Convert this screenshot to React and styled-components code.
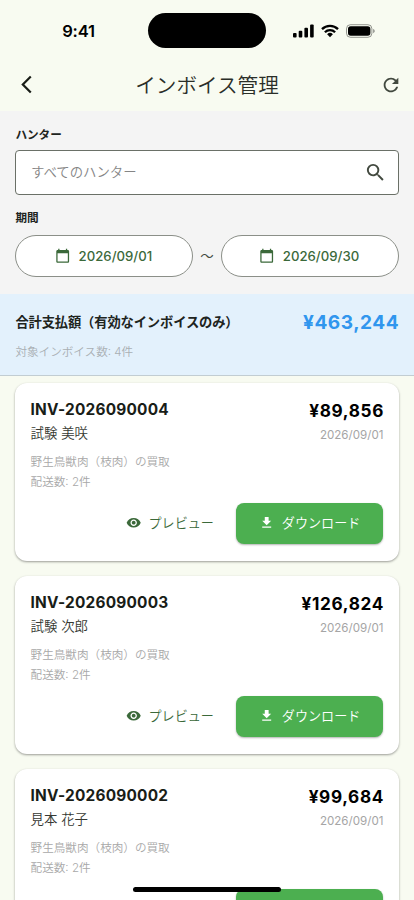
import React from "react";
import styled, { createGlobalStyle } from "styled-components";
import {
  MdArrowBackIosNew,
  MdCalendarToday,
  MdFileDownload,
  MdRefresh,
  MdSearch,
  MdVisibility,
} from "react-icons/md";

const invoices = [
  { id: "INV-2026090004", name: "試験 美咲", amount: "¥89,856" },
  { id: "INV-2026090003", name: "試験 次郎", amount: "¥126,824" },
  { id: "INV-2026090002", name: "見本 花子", amount: "¥99,684" },
];

const StatusBar = () => (
  <Status>
    <Clock>9:41</Clock>
    <Island />
    <Indicators>
      <svg width="21" height="14" viewBox="0 0 21 14">
        <rect x="0" y="9" width="3.6" height="4.6" rx="1" />
        <rect x="5.7" y="6.7" width="3.6" height="6.9" rx="1" />
        <rect x="11.4" y="3.8" width="3.6" height="9.8" rx="1" />
        <rect x="17.1" y="0.6" width="3.6" height="13" rx="1" />
      </svg>
      <svg width="18" height="14" viewBox="0 0 18 14">
        <g fill="none" stroke="#000" strokeWidth="2.3">
          <path d="M1 5.1a11.3 11.3 0 0 1 16 0" />
          <path d="M3.9 8.2a7.2 7.2 0 0 1 10.2 0" />
        </g>
        <path d="M9 13.2 6.1 10.3a4.1 4.1 0 0 1 5.8 0z" />
      </svg>
      <svg width="29" height="14" viewBox="0 0 29 14">
        <rect x="0.5" y="0.7" width="25.4" height="12.6" rx="4" fill="none" stroke="#000" strokeOpacity="0.4" />
        <rect x="2" y="2.2" width="22.4" height="9.6" rx="2.7" />
        <path d="M27.2 4.9v4.4c.9-.4 1.5-1.2 1.5-2.2s-.6-1.8-1.5-2.2z" opacity="0.45" />
      </svg>
    </Indicators>
  </Status>
);

const InvoiceCard = ({ id, name, amount }) => (
  <Card>
    <CardHead>
      <div>
        <InvoiceId>{id}</InvoiceId>
        <Hunter>{name}</Hunter>
      </div>
      <CardRight>
        <Amount>{amount}</Amount>
        <IssueDate>2026/09/01</IssueDate>
      </CardRight>
    </CardHead>
    <Detail>野生鳥獣肉（枝肉）の買取</Detail>
    <Detail>配送数: 2件</Detail>
    <Actions>
      <PreviewButton>
        <MdVisibility size={15.4} />
        プレビュー
      </PreviewButton>
      <DownloadButton>
        <MdFileDownload size={15.4} />
        ダウンロード
      </DownloadButton>
    </Actions>
  </Card>
);

const App = () => {
  return (
    <Screen>
      <GlobalStyle />
      <StatusBar />
      <AppBar>
        <MdArrowBackIosNew size={21} color="#191d17" />
        <Title>インボイス管理</Title>
        <MdRefresh size={22} color="#42493f" />
      </AppBar>
      <Filters>
        <Label>ハンター</Label>
        <SearchField>
          <span>すべてのハンター</span>
          <MdSearch size={23} />
        </SearchField>
        <Label>期間</Label>
        <Period>
          <DateButton>
            <MdCalendarToday size={15.4} />
            2026/09/01
          </DateButton>
          <Tilde>〜</Tilde>
          <DateButton>
            <MdCalendarToday size={15.4} />
            2026/09/30
          </DateButton>
        </Period>
      </Filters>
      <Summary>
        <SummaryRow>
          <SummaryLabel>合計支払額（有効なインボイスのみ）</SummaryLabel>
          <Total>¥463,244</Total>
        </SummaryRow>
        <Count>対象インボイス数: 4件</Count>
      </Summary>
      <List>
        {invoices.map((invoice) => (
          <InvoiceCard key={invoice.id} {...invoice} />
        ))}
      </List>
      <HomeIndicator />
    </Screen>
  );
};

const GlobalStyle = createGlobalStyle`
  * {
    box-sizing: border-box;
  }
  body {
    margin: 0;
    font-family: Inter, "Noto Sans CJK JP", sans-serif;
  }
  svg {
    display: block;
    flex-shrink: 0;
  }
  button {
    font-family: inherit;
    cursor: pointer;
  }
`;

const Screen = styled.div`
  position: relative;
  display: flex;
  flex-direction: column;
  width: 414px;
  height: 900px;
  overflow: hidden;
  background: #f8fbf1;
`;

const Status = styled.div`
  display: grid;
  grid-template-columns: 148px 118px 148px;
  align-items: center;
  height: 58px;
  padding-top: 3px;
  flex-shrink: 0;
`;

const Clock = styled.div`
  padding-left: 9px;
  text-align: center;
  font-size: 16.6px;
  font-weight: 600;
  letter-spacing: -0.2px;
`;

const Island = styled.div`
  height: 35px;
  border-radius: 18px;
  background: #000;
`;

const Indicators = styled.div`
  display: flex;
  align-items: center;
  gap: 7px;
  padding-left: 27px;
`;

const AppBar = styled.header`
  display: flex;
  align-items: center;
  justify-content: space-between;
  height: 53px;
  padding: 0 12px 0 16px;
  flex-shrink: 0;
`;

const Title = styled.h1`
  margin: 0;
  padding: 2px 3px 0 0;
  font-size: 20.6px;
  font-weight: 350;
  line-height: 28px;
  color: #2a2e28;
`;

const Filters = styled.section`
  height: 183px;
  padding: 16px 15.4px 0;
  background: #f4f4f4;
  flex-shrink: 0;
`;

const Label = styled.div`
  height: 17px;
  font-size: 11.6px;
  font-weight: 700;
  line-height: 17px;
  color: #20241e;
`;

const SearchField = styled.div`
  display: flex;
  align-items: center;
  justify-content: space-between;
  height: 45px;
  margin: 6px 0 15.4px;
  padding: 0 10.5px 1px 14.6px;
  border: 1px solid #6a7067;
  border-radius: 4px;
  background: #fff;
  color: #42493f;

  span {
    font-size: 13.4px;
    font-weight: 350;
    line-height: 20px;
    color: #858585;
  }
`;

const Period = styled.div`
  display: flex;
  align-items: center;
  margin-top: 8px;
`;

const DateButton = styled.button`
  display: flex;
  flex: 1;
  align-items: center;
  justify-content: center;
  gap: 8px;
  height: 41.5px;
  padding: 0 1px 0 0;
  border: 1px solid #8b8f88;
  border-radius: 21px;
  background: #fff;
  color: #3b693a;
  font-size: 13.2px;
  font-weight: 500;
`;

const Tilde = styled.span`
  width: 28px;
  text-align: center;
  font-size: 13.5px;
  line-height: 20px;
  padding-bottom: 1px;
  color: #42493f;
`;

const Summary = styled.section`
  height: 82px;
  padding: 14px 15.4px 0;
  border-bottom: 1px solid #c2cdd2;
  background: #e3f1fc;
  flex-shrink: 0;
`;

const SummaryRow = styled.div`
  display: flex;
  align-items: center;
  justify-content: space-between;
  height: 27px;
`;

const SummaryLabel = styled.div`
  font-size: 13.3px;
  font-weight: 700;
  letter-spacing: -0.15px;
  color: #20241e;
`;

const Total = styled.div`
  font-size: 19.1px;
  font-weight: 700;
  letter-spacing: 0.5px;
  margin-right: -0.5px;
  color: #3096ee;
`;

const Count = styled.div`
  margin-top: 9px;
  font-size: 11.6px;
  font-weight: 350;
  line-height: 17px;
  color: #a9afb3;
`;

const List = styled.main`
  display: flex;
  flex-direction: column;
  gap: 15px;
  padding: 7px 15.4px 0;
`;

const Card = styled.article`
  height: 178px;
  padding: 15px 15.2px;
  border-radius: 12px;
  background: #fff;
  box-shadow: 0 1px 3px rgba(0, 0, 0, 0.15), 0 1px 2px rgba(0, 0, 0, 0.25);
  flex-shrink: 0;
`;

const CardHead = styled.div`
  display: flex;
  justify-content: space-between;
  height: 55px;
`;

const CardRight = styled.div`
  text-align: right;
`;

const InvoiceId = styled.div`
  font-size: 15.4px;
  font-weight: 700;
  line-height: 23px;
  letter-spacing: 0.22px;
  color: #191d17;
`;

const Hunter = styled.div`
  font-size: 13.4px;
  font-weight: 350;
  line-height: 24px;
  color: #363933;
`;

const Amount = styled.div`
  font-size: 17.2px;
  font-weight: 700;
  line-height: 25px;
  letter-spacing: 0.65px;
  margin-right: -0.6px;
  color: #000;
`;

const IssueDate = styled.div`
  font-size: 11.6px;
  line-height: 24px;
  color: #a5a5a5;
`;

const Detail = styled.div`
  font-size: 11.6px;
  font-weight: 350;
  line-height: 19.5px;
  color: #a8a8a8;
`;

const Actions = styled.div`
  display: flex;
  justify-content: flex-end;
  gap: 8px;
  margin-top: 10.5px;
`;

const PreviewButton = styled.button`
  display: flex;
  align-items: center;
  gap: 7.5px;
  height: 41.5px;
  padding: 0 14px 1px;
  border: none;
  background: none;
  color: #3b693a;
  font-size: 13.1px;
  font-weight: 350;
  line-height: 16px;
`;

const DownloadButton = styled(PreviewButton)`
  justify-content: center;
  width: 147.5px;
  padding: 0 0 1px;
  border-radius: 8px;
  background: #4caf50;
  color: #fff;
  box-shadow: 0 1px 2px rgba(0, 0, 0, 0.3);
`;

const HomeIndicator = styled.div`
  position: absolute;
  left: 133px;
  bottom: 8px;
  width: 148px;
  height: 5px;
  border-radius: 3px;
  background: #000;
`;

export default App;
